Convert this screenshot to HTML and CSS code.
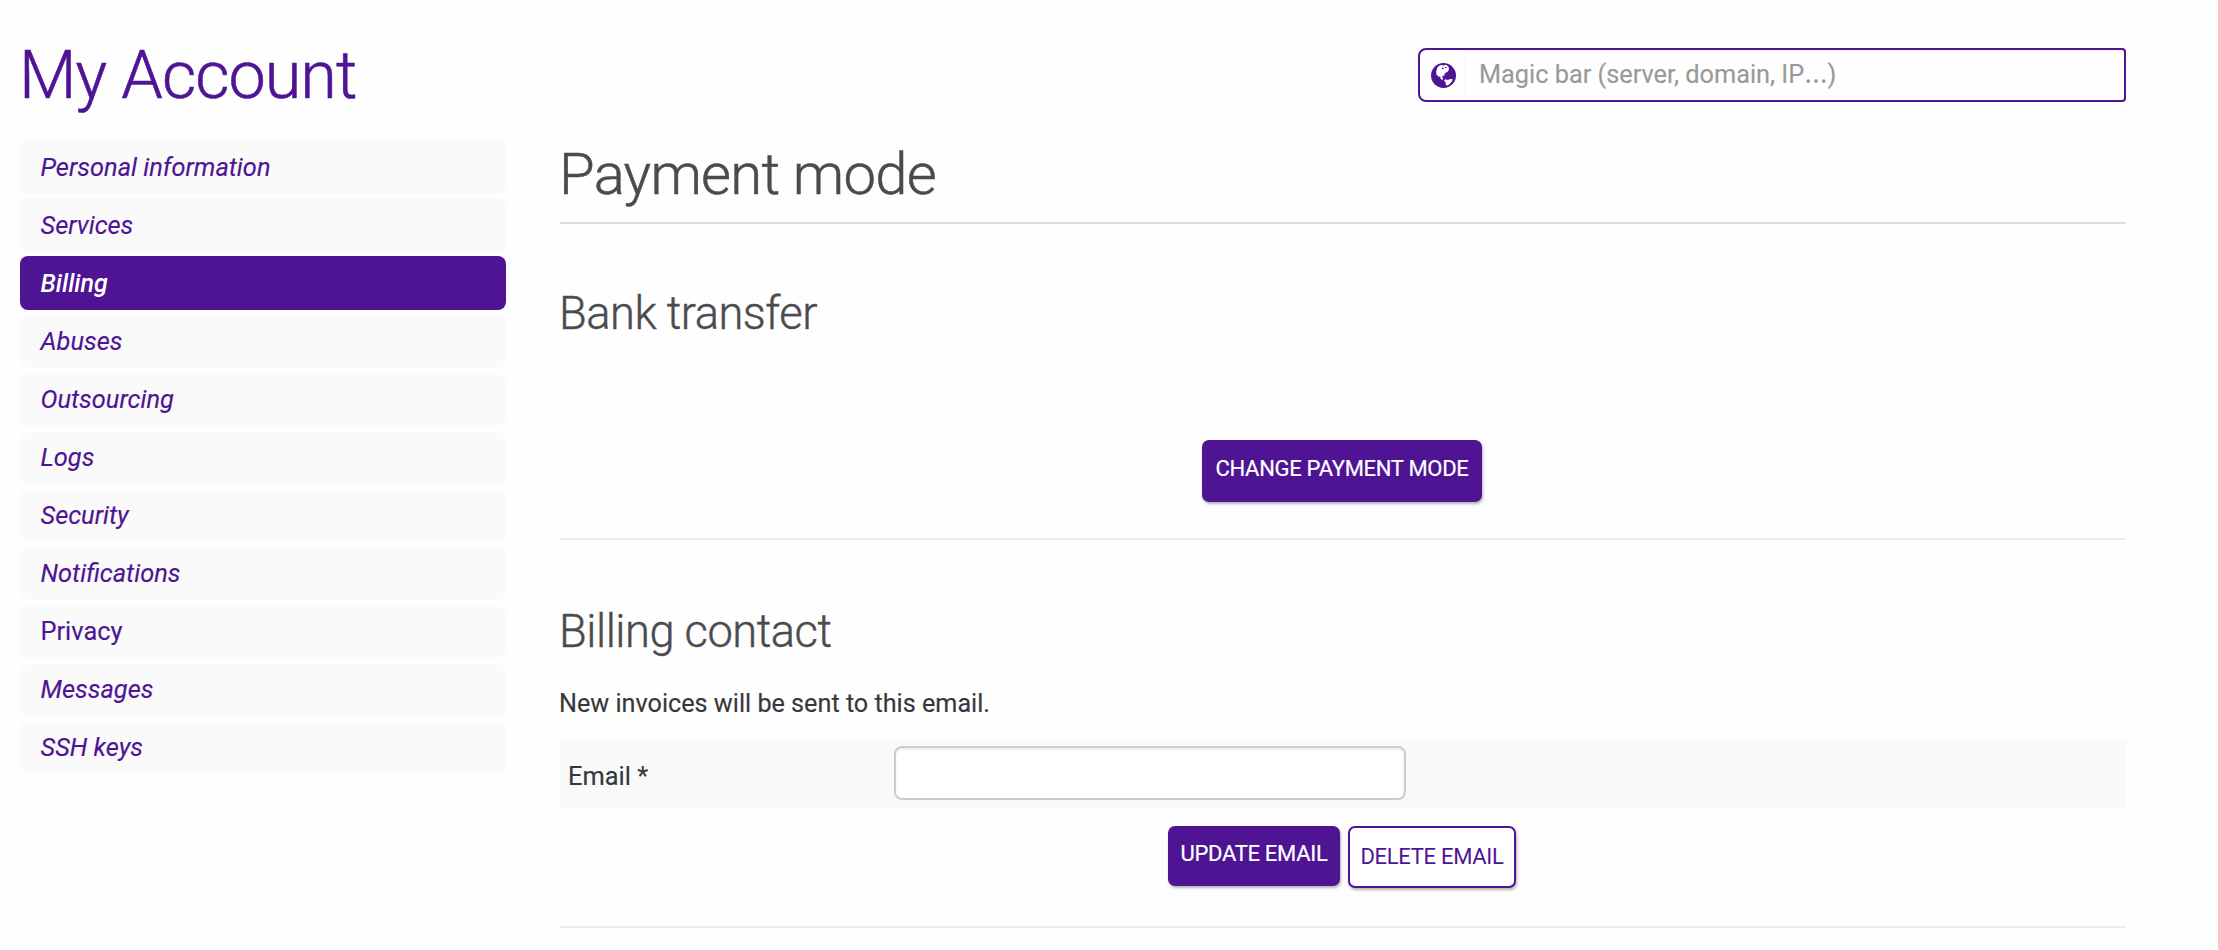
FILE: index.html
```html
<!DOCTYPE html>
<html lang="en">
<head>
<meta charset="utf-8">
<title>My Account</title>
<link rel="stylesheet" href="styles.css">
</head>
<body>
<header class="header">
  <h1 class="title">My Account</h1>
  <form class="magic">
    <span class="magic-icon">
      <svg class="globe" viewBox="0 0 25 25" aria-hidden="true">
        <circle cx="12.5" cy="12.5" r="12.5"/>
        <path class="land" d="M8.4 2.4 L6.2 4.8 L5.2 8.4 L5.4 11.6 L7.4 13.4 L9.4 13.8 L9.4 15.6 L11.2 17 L12.2 15.8 L11.2 14.2 L11.6 12.8 L13.6 12.4 L13.6 10.6 L15.2 9.6 L17 8.6 L18 6 L17.4 3.6 L14.8 1.8 L12.4 2.4 L10.6 2 Z M12.8 17.4 L14.4 16.2 L17 17 L19 16 L21.8 16.2 L20.8 18.6 L18.4 21.2 L16 22.8 L14.8 21.6 L14.6 19.2 Z"/>
        <path d="M11 4.8 h1.8 v1.2 h-1.8 z M14 4 h1.6 v1 h-1.6 z"/>
      </svg>
    </span>
    <span class="magic-input" role="textbox">Magic bar (server, domain, IP<span class="dots">…</span>)</span>
  </form>
</header>
<div class="layout">
  <nav class="menu">
    <a class="item">Personal information</a>
    <a class="item">Services</a>
    <a class="item active">Billing</a>
    <a class="item short">Abuses</a>
    <a class="item short">Outsourcing</a>
    <a class="item short">Logs</a>
    <a class="item short">Security</a>
    <a class="item short">Notifications</a>
    <a class="item short upright">Privacy</a>
    <a class="item short">Messages</a>
    <a class="item short">SSH keys</a>
  </nav>
  <main class="content">
    <h2 class="page-title">Payment mode</h2>
    <section class="section">
      <h3 class="section-title">Bank transfer</h3>
      <div class="actions payment"><button class="btn large">CHANGE PAYMENT MODE</button></div>
    </section>
    <section class="section contact">
      <h3 class="section-title">Billing contact</h3>
      <p class="note">New invoices will be sent to this email.</p>
      <div class="field"><label class="label" for="email">Email *</label><input class="text-input" id="email" type="text"></div>
      <div class="actions"><button class="btn">UPDATE EMAIL</button><button class="btn outline">DELETE EMAIL</button></div>
    </section>
  </main>
</div>
</body>
</html>
```
FILE: styles.css
```css
* { box-sizing: border-box; }
body { margin: 0; height: 950px; overflow: hidden; background: #fefefe; color: #37373b; font: 25.4px/40px Roboto, sans-serif; -webkit-text-stroke: .15px currentColor; }
h1, h2, h3, p { margin: 0; font-weight: 300; }
input, button { font-family: inherit; margin: 0; }

.header { display: flex; justify-content: space-between; padding: 48px 92px 38px 20px; }
.title { margin-left: -1px; font-size: 66.5px; line-height: 54px; letter-spacing: -1px; color: #4e1494; -webkit-text-stroke-width: .6px; }
.magic { display: flex; width: 708px; height: 54px; border: 2px solid #4e1494; border-radius: 8px 4px 4px 8px; overflow: hidden; }
.magic-icon { display: flex; width: 45px; padding: 13px 0 0 11px; border-right: 1px solid #f9f9f9; }
.globe { width: 25px; height: 25px; fill: #4e1494; }
.land { fill: #fefefe; }
.magic-input { flex: 1; padding: 0 14px; color: #999; font-size: 25.3px; line-height: 50px; white-space: nowrap; box-shadow: inset 0 2px 2px rgba(0,0,0,.04); }
.dots { font-family: "Open Sans", sans-serif; font-size: 30px; line-height: 1; -webkit-text-stroke-width: 0; }

.layout { display: flex; gap: 54px; padding: 0 92px 0 20px; }
.menu { display: flex; flex: none; flex-direction: column; width: 486px; }
.item { height: 54px; margin-bottom: 4px; padding-left: 20.5px; border-radius: 8px; background: #fafafa; color: #4e1494; font-size: 25.4px; line-height: 55px; font-style: italic; }
.item.short { height: 52px; margin: 2px 0 4px; line-height: 51px; }
.item.active { background: #4e1494; color: #fff; font-weight: 500; font-size: 25px; line-height: 56px; -webkit-text-stroke-width: 0; }
.item.upright { font-style: normal; }

.content { flex: 1; }
.page-title { height: 84px; border-bottom: 2px solid #ddd; font-size: 58px; line-height: 69px; letter-spacing: -.75px; text-indent: -1px; color: #4b4b4f; -webkit-text-stroke-width: .5px; }
.section { padding-top: 61px; border-bottom: 2px solid #eee; height: 316px; }
.section-title { font-size: 45.3px; line-height: 58px; letter-spacing: -.5px; text-indent: -1px; color: #4b4b4f; -webkit-text-stroke-width: .4px; }
.contact { height: 388px; padding-top: 63px; }
.actions { display: flex; justify-content: center; align-items: flex-start; gap: 8px; margin-right: 2px; }
.payment { padding-top: 97px; }
.btn { width: 172px; height: 60px; padding: 0 0 4px; border: 0; border-radius: 7px; background: #4e1494; color: #fff; font-size: 22px; line-height: 56px; letter-spacing: -.3px; white-space: nowrap; box-shadow: 1px 2px 3px rgba(0,0,0,.3); -webkit-text-stroke: .2px currentColor; }
.btn.large { width: 280px; height: 62px; padding-bottom: 4px; }
.btn.outline { width: 168px; height: 62px; padding: 0; border: 2px solid #4e1494; background: #fff; color: #4e1494; -webkit-text-stroke-width: 0; }
.note { font-weight: 400; font-size: 25.2px; line-height: 40px; margin: 23px 0 16px; text-indent: -1px; }
.field { display: flex; height: 68px; margin-bottom: 18px; padding: 6px 8px; background: #f9f9f9; }
.label { width: 326px; line-height: 61px; height: 56px; }
.text-input { width: 512px; height: 54px; border: 2px solid #ccc; border-radius: 8px; background: #fff; box-shadow: inset 0 2px 2px rgba(0,0,0,.075); }
```
